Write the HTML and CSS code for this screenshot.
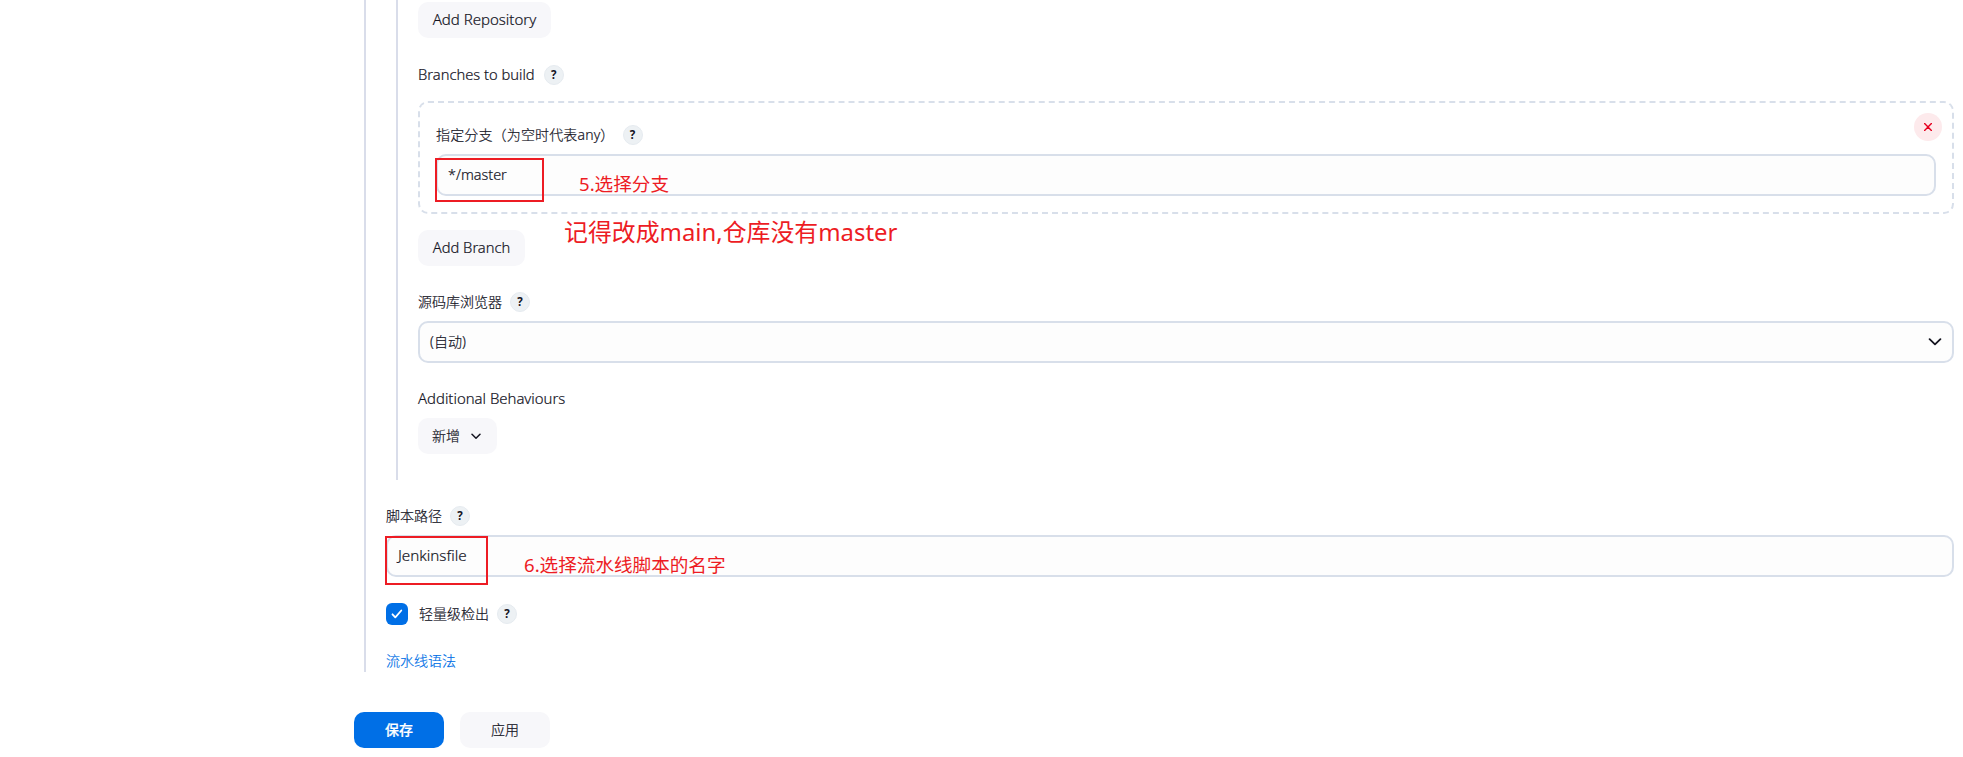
FILE: index.html
```html
<!DOCTYPE html>
<html lang="zh-CN">
<head>
<meta charset="utf-8">
<title>Pipeline</title>
<link rel="stylesheet" href="styles.css">
</head>
<body>
<main class="page">
  <section class="definition">
    <div class="scm">
      <button class="btn btn-repo"><span class="latin t-repo">Add Repository</span></button>
      <div class="label label-branches"><span class="latin">Branches to build</span><span class="help">?</span></div>
      <div class="chunk">
        <div class="label label-spec"><span class="t-spec">指定分支（为空时代表any）</span><span class="help">?</span></div>
        <div class="field"><span class="latin t-master">*/master</span></div>
        <button class="remove" aria-label="x"><svg width="8" height="8" viewBox="0 0 8 8"><path d="M.6.6l6.8 6.8M7.4.6L.6 7.4"/></svg></button>
        <div class="mark mark-branch"></div>
        <div class="note note-branch">5.选择分支</div>
        <div class="note note-main">记得改成main,仓库没有master</div>
      </div>
      <button class="btn btn-branch"><span class="latin">Add Branch</span></button>
      <div class="label label-browser"><span>源码库浏览器</span><span class="help">?</span></div>
      <div class="field select"><span>(自动)</span><svg width="14" height="8" viewBox="0 0 14 8"><path d="M1.600 1.200L7 6.400l5.400-5.200"/></svg></div>
      <div class="label label-behaviours"><span class="latin t-behaviours">Additional Behaviours</span></div>
      <button class="btn btn-add"><span>新增</span><svg width="10" height="7" viewBox="0 0 10 7"><path d="M1 1.200l4 4 4-4"/></svg></button>
    </div>
    <div class="label label-path"><span>脚本路径</span><span class="help">?</span></div>
    <div class="field path">
      <span class="latin t-jenkins">Jenkinsfile</span>
      <div class="mark mark-path"></div>
      <div class="note note-path">6.选择流水线脚本的名字</div>
    </div>
    <div class="check"><span class="box"><svg width="12" height="10" viewBox="0 0 12 10"><path d="M1.500 5.300L4.300 8.300 10.300 1.500"/></svg></span><span class="check-text">轻量级检出</span><span class="help">?</span></div>
    <a class="link">流水线语法</a>
  </section>
  <div class="actions">
    <button class="btn primary">保存</button>
    <button class="btn">应用</button>
  </div>
</main>
</body>
</html>
```
FILE: styles.css
```css
* { box-sizing: border-box; }
body {
  margin: 0;
  background: #fff;
  color: #14141f;
  font: 300 14px/20px "Noto Sans", "Noto Sans CJK SC", sans-serif;
  -webkit-text-stroke: .2px currentColor;
  overflow: hidden;
}
.page { height: 757px; padding: 0 9px 0 354px; }
.definition {
  height: 672px;
  margin-left: 10px;
  padding-left: 20px;
  border-left: 2px solid #d9ddea;
}
.scm {
  height: 480px;
  margin-left: 10px;
  padding: 2px 0 0 20px;
  border-left: 2px solid #d9ddea;
}
.latin { padding-bottom: 2px; font-size: 14.700px; }
.btn {
  display: flex;
  align-items: center;
  justify-content: center;
  height: 36px;
  padding: 0;
  border: 0;
  border-radius: 10px;
  background: #f7f7fa;
  color: inherit;
  font: inherit;
  white-space: nowrap;
}
.btn-repo { width: 133px; }
.t-repo { font-size: 15px; }
.btn-branch { width: 107px; margin-top: 16px; }
.btn-add { width: 79px; gap: 11px; margin-top: 9px; padding-right: 2px; }
.label { display: flex; align-items: center; height: 20px; gap: 8px; white-space: nowrap; }
.label-branches { margin-top: 27px; gap: 9px; }
.t-master { padding-bottom: 0; font-size: 14.400px; }
.t-spec { letter-spacing: .15px; }
.t-behaviours { font-size: 14.900px; }
.t-jenkins { font-size: 15.200px; }
.label-browser { margin-top: 26px; }
.label-behaviours { margin-top: 26px; }
.label-path { margin-top: 26px; }
.help {
  flex: none;
  width: 20px;
  height: 20px;
  border: 1px solid #e6ebf0;
  border-radius: 50%;
  background: #edf1f4;
  font: 700 11.500px/18px "Noto Sans", sans-serif;
  text-align: center;
  -webkit-text-stroke: 0;
}
.chunk {
  position: relative;
  height: 113px;
  margin-top: 16px;
  padding: 22px 16px 0;
  border: 2px dashed #d8dfea;
  border-radius: 10px;
}
.field {
  display: flex;
  align-items: center;
  height: 42px;
  margin-top: 9px;
  padding: 0 10px;
  border: 2px solid #d8dfea;
  border-radius: 10px;
  background: #fdfdfd;
}
.path { position: relative; }
svg { flex: none; fill: none; stroke: #14141f; stroke-width: 1.800; stroke-linecap: round; stroke-linejoin: round; }
.btn-add svg { stroke-width: 1.500; }
.select { justify-content: space-between; }
.remove {
  position: absolute;
  top: 10px;
  right: 10px;
  display: grid;
  place-items: center;
  width: 28px;
  height: 28px;
  padding: 0;
  border: 0;
  border-radius: 50%;
  background: #fdeaec;
}
.remove svg { stroke: #e6001f; stroke-width: 1.400; }
.mark { position: absolute; border: 2px solid #ed1c24; }
.mark-branch { left: 15px; top: 55px; width: 109px; height: 44px; }
.mark-path { left: -3px; top: -1px; width: 103px; height: 49px; }
.note { position: absolute; color: #ed1c24; font-weight: 400; white-space: nowrap; -webkit-text-stroke: 0; }
.note-branch { left: 159px; top: 69px; font-size: 18.600px; line-height: 24px; }
.note-main { left: 144px; top: 112px; font-size: 23.900px; line-height: 34px; }
.note-path { left: 136px; top: 16px; font-size: 18.600px; line-height: 24px; }
.check { display: flex; align-items: center; height: 22px; margin-top: 26px; }
.box { display: grid; place-items: center; width: 22px; height: 22px; margin-right: 11px; border-radius: 6px; background: #006fe6; }
.box svg { stroke: #fff; }
.check-text { margin-right: 8px; }
.link { display: block; margin-top: 26px; color: #006fe6; }
.actions { display: flex; gap: 16px; margin-top: 40px; }
.actions .btn { width: 90px; }
.actions .primary { background: #006fe6; color: #fff; font-weight: 500; }
```
